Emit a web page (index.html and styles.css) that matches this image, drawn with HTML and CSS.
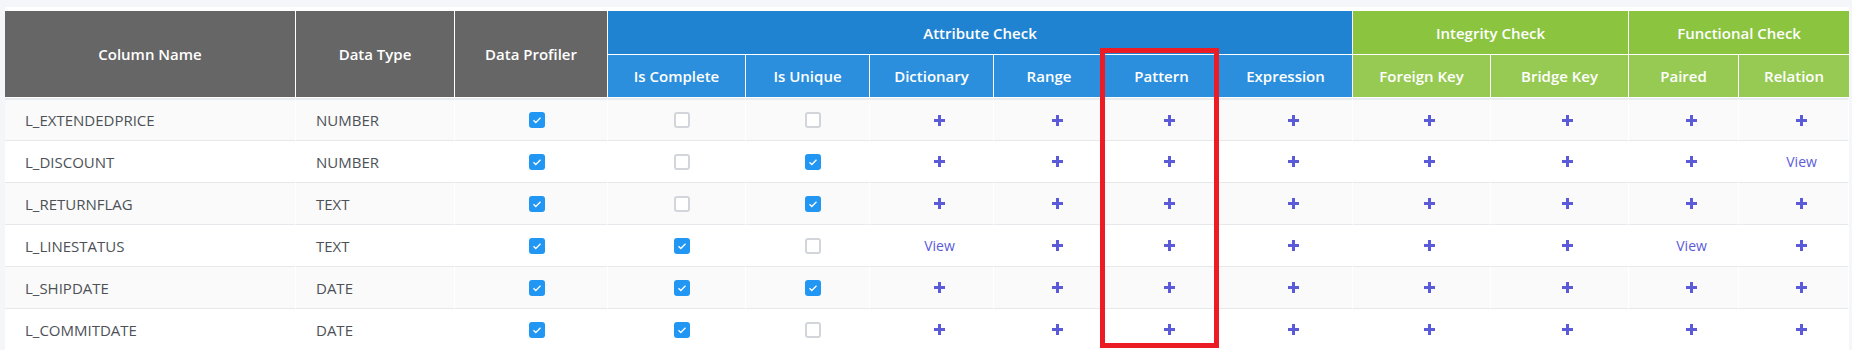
FILE: index.html
```html
<html>

<head>
    <link rel="stylesheet" href="styles.css">
</head>

<body>
    <div class="panel">
        <table class="rules">
            <colgroup>
                <col class="w-name">
                <col class="w-type">
                <col class="w-profiler">
                <col class="w-complete">
                <col class="w-unique">
                <col class="w-dict">
                <col class="w-range">
                <col class="w-pattern">
                <col class="w-expr">
                <col class="w-fk">
                <col class="w-bk">
                <col class="w-paired">
                <col class="w-relation">
            </colgroup>
            <thead>
                <tr class="head-top">
                    <th rowspan="2" class="grey">Column Name</th>
                    <th rowspan="2" class="grey">Data Type</th>
                    <th rowspan="2" class="grey">Data Profiler</th>
                    <th colspan="6" class="blue">Attribute Check</th>
                    <th colspan="2" class="green">Integrity Check</th>
                    <th colspan="2" class="green">Functional Check</th>
                </tr>
                <tr class="head-sub">
                    <th class="blue-light">Is Complete</th>
                    <th class="blue-light">Is Unique</th>
                    <th class="blue-light">Dictionary</th>
                    <th class="blue-light">Range</th>
                    <th class="blue-light">Pattern</th>
                    <th class="blue-light">Expression</th>
                    <th class="green-light">Foreign Key</th>
                    <th class="green-light">Bridge Key</th>
                    <th class="green-light">Paired</th>
                    <th class="green-light">Relation</th>
                </tr>
            </thead>
            <tbody>
                <tr>
                    <td class="txt">L_EXTENDEDPRICE</td>
                    <td class="txt">NUMBER</td>
                    <td><span class="box on"><svg viewBox="0 0 16 16"><path d="M4.5 8.3l2.3 2.2 4.7-4.7"/></svg></span></td>
                    <td><span class="box"></span></td>
                    <td><span class="box"></span></td>
                    <td><span class="add"><svg viewBox="0 0 11 11"><rect x="4" y="0" width="3" height="11"/><rect x="0" y="4" width="11" height="3"/></svg></span></td>
                    <td><span class="add"><svg viewBox="0 0 11 11"><rect x="4" y="0" width="3" height="11"/><rect x="0" y="4" width="11" height="3"/></svg></span></td>
                    <td><span class="add"><svg viewBox="0 0 11 11"><rect x="4" y="0" width="3" height="11"/><rect x="0" y="4" width="11" height="3"/></svg></span></td>
                    <td><span class="add"><svg viewBox="0 0 11 11"><rect x="4" y="0" width="3" height="11"/><rect x="0" y="4" width="11" height="3"/></svg></span></td>
                    <td><span class="add"><svg viewBox="0 0 11 11"><rect x="4" y="0" width="3" height="11"/><rect x="0" y="4" width="11" height="3"/></svg></span></td>
                    <td><span class="add"><svg viewBox="0 0 11 11"><rect x="4" y="0" width="3" height="11"/><rect x="0" y="4" width="11" height="3"/></svg></span></td>
                    <td><span class="add"><svg viewBox="0 0 11 11"><rect x="4" y="0" width="3" height="11"/><rect x="0" y="4" width="11" height="3"/></svg></span></td>
                    <td><span class="add"><svg viewBox="0 0 11 11"><rect x="4" y="0" width="3" height="11"/><rect x="0" y="4" width="11" height="3"/></svg></span></td>
                </tr>
                <tr>
                    <td class="txt">L_DISCOUNT</td>
                    <td class="txt">NUMBER</td>
                    <td><span class="box on"><svg viewBox="0 0 16 16"><path d="M4.5 8.3l2.3 2.2 4.7-4.7"/></svg></span></td>
                    <td><span class="box"></span></td>
                    <td><span class="box on"><svg viewBox="0 0 16 16"><path d="M4.5 8.3l2.3 2.2 4.7-4.7"/></svg></span></td>
                    <td><span class="add"><svg viewBox="0 0 11 11"><rect x="4" y="0" width="3" height="11"/><rect x="0" y="4" width="11" height="3"/></svg></span></td>
                    <td><span class="add"><svg viewBox="0 0 11 11"><rect x="4" y="0" width="3" height="11"/><rect x="0" y="4" width="11" height="3"/></svg></span></td>
                    <td><span class="add"><svg viewBox="0 0 11 11"><rect x="4" y="0" width="3" height="11"/><rect x="0" y="4" width="11" height="3"/></svg></span></td>
                    <td><span class="add"><svg viewBox="0 0 11 11"><rect x="4" y="0" width="3" height="11"/><rect x="0" y="4" width="11" height="3"/></svg></span></td>
                    <td><span class="add"><svg viewBox="0 0 11 11"><rect x="4" y="0" width="3" height="11"/><rect x="0" y="4" width="11" height="3"/></svg></span></td>
                    <td><span class="add"><svg viewBox="0 0 11 11"><rect x="4" y="0" width="3" height="11"/><rect x="0" y="4" width="11" height="3"/></svg></span></td>
                    <td><span class="add"><svg viewBox="0 0 11 11"><rect x="4" y="0" width="3" height="11"/><rect x="0" y="4" width="11" height="3"/></svg></span></td>
                    <td><a class="view">View</a></td>
                </tr>
                <tr>
                    <td class="txt">L_RETURNFLAG</td>
                    <td class="txt">TEXT</td>
                    <td><span class="box on"><svg viewBox="0 0 16 16"><path d="M4.5 8.3l2.3 2.2 4.7-4.7"/></svg></span></td>
                    <td><span class="box"></span></td>
                    <td><span class="box on"><svg viewBox="0 0 16 16"><path d="M4.5 8.3l2.3 2.2 4.7-4.7"/></svg></span></td>
                    <td><span class="add"><svg viewBox="0 0 11 11"><rect x="4" y="0" width="3" height="11"/><rect x="0" y="4" width="11" height="3"/></svg></span></td>
                    <td><span class="add"><svg viewBox="0 0 11 11"><rect x="4" y="0" width="3" height="11"/><rect x="0" y="4" width="11" height="3"/></svg></span></td>
                    <td><span class="add"><svg viewBox="0 0 11 11"><rect x="4" y="0" width="3" height="11"/><rect x="0" y="4" width="11" height="3"/></svg></span></td>
                    <td><span class="add"><svg viewBox="0 0 11 11"><rect x="4" y="0" width="3" height="11"/><rect x="0" y="4" width="11" height="3"/></svg></span></td>
                    <td><span class="add"><svg viewBox="0 0 11 11"><rect x="4" y="0" width="3" height="11"/><rect x="0" y="4" width="11" height="3"/></svg></span></td>
                    <td><span class="add"><svg viewBox="0 0 11 11"><rect x="4" y="0" width="3" height="11"/><rect x="0" y="4" width="11" height="3"/></svg></span></td>
                    <td><span class="add"><svg viewBox="0 0 11 11"><rect x="4" y="0" width="3" height="11"/><rect x="0" y="4" width="11" height="3"/></svg></span></td>
                    <td><span class="add"><svg viewBox="0 0 11 11"><rect x="4" y="0" width="3" height="11"/><rect x="0" y="4" width="11" height="3"/></svg></span></td>
                </tr>
                <tr>
                    <td class="txt">L_LINESTATUS</td>
                    <td class="txt">TEXT</td>
                    <td><span class="box on"><svg viewBox="0 0 16 16"><path d="M4.5 8.3l2.3 2.2 4.7-4.7"/></svg></span></td>
                    <td><span class="box on"><svg viewBox="0 0 16 16"><path d="M4.5 8.3l2.3 2.2 4.7-4.7"/></svg></span></td>
                    <td><span class="box"></span></td>
                    <td><a class="view">View</a></td>
                    <td><span class="add"><svg viewBox="0 0 11 11"><rect x="4" y="0" width="3" height="11"/><rect x="0" y="4" width="11" height="3"/></svg></span></td>
                    <td><span class="add"><svg viewBox="0 0 11 11"><rect x="4" y="0" width="3" height="11"/><rect x="0" y="4" width="11" height="3"/></svg></span></td>
                    <td><span class="add"><svg viewBox="0 0 11 11"><rect x="4" y="0" width="3" height="11"/><rect x="0" y="4" width="11" height="3"/></svg></span></td>
                    <td><span class="add"><svg viewBox="0 0 11 11"><rect x="4" y="0" width="3" height="11"/><rect x="0" y="4" width="11" height="3"/></svg></span></td>
                    <td><span class="add"><svg viewBox="0 0 11 11"><rect x="4" y="0" width="3" height="11"/><rect x="0" y="4" width="11" height="3"/></svg></span></td>
                    <td><a class="view">View</a></td>
                    <td><span class="add"><svg viewBox="0 0 11 11"><rect x="4" y="0" width="3" height="11"/><rect x="0" y="4" width="11" height="3"/></svg></span></td>
                </tr>
                <tr>
                    <td class="txt">L_SHIPDATE</td>
                    <td class="txt">DATE</td>
                    <td><span class="box on"><svg viewBox="0 0 16 16"><path d="M4.5 8.3l2.3 2.2 4.7-4.7"/></svg></span></td>
                    <td><span class="box on"><svg viewBox="0 0 16 16"><path d="M4.5 8.3l2.3 2.2 4.7-4.7"/></svg></span></td>
                    <td><span class="box on"><svg viewBox="0 0 16 16"><path d="M4.5 8.3l2.3 2.2 4.7-4.7"/></svg></span></td>
                    <td><span class="add"><svg viewBox="0 0 11 11"><rect x="4" y="0" width="3" height="11"/><rect x="0" y="4" width="11" height="3"/></svg></span></td>
                    <td><span class="add"><svg viewBox="0 0 11 11"><rect x="4" y="0" width="3" height="11"/><rect x="0" y="4" width="11" height="3"/></svg></span></td>
                    <td><span class="add"><svg viewBox="0 0 11 11"><rect x="4" y="0" width="3" height="11"/><rect x="0" y="4" width="11" height="3"/></svg></span></td>
                    <td><span class="add"><svg viewBox="0 0 11 11"><rect x="4" y="0" width="3" height="11"/><rect x="0" y="4" width="11" height="3"/></svg></span></td>
                    <td><span class="add"><svg viewBox="0 0 11 11"><rect x="4" y="0" width="3" height="11"/><rect x="0" y="4" width="11" height="3"/></svg></span></td>
                    <td><span class="add"><svg viewBox="0 0 11 11"><rect x="4" y="0" width="3" height="11"/><rect x="0" y="4" width="11" height="3"/></svg></span></td>
                    <td><span class="add"><svg viewBox="0 0 11 11"><rect x="4" y="0" width="3" height="11"/><rect x="0" y="4" width="11" height="3"/></svg></span></td>
                    <td><span class="add"><svg viewBox="0 0 11 11"><rect x="4" y="0" width="3" height="11"/><rect x="0" y="4" width="11" height="3"/></svg></span></td>
                </tr>
                <tr>
                    <td class="txt">L_COMMITDATE</td>
                    <td class="txt">DATE</td>
                    <td><span class="box on"><svg viewBox="0 0 16 16"><path d="M4.5 8.3l2.3 2.2 4.7-4.7"/></svg></span></td>
                    <td><span class="box on"><svg viewBox="0 0 16 16"><path d="M4.5 8.3l2.3 2.2 4.7-4.7"/></svg></span></td>
                    <td><span class="box"></span></td>
                    <td><span class="add"><svg viewBox="0 0 11 11"><rect x="4" y="0" width="3" height="11"/><rect x="0" y="4" width="11" height="3"/></svg></span></td>
                    <td><span class="add"><svg viewBox="0 0 11 11"><rect x="4" y="0" width="3" height="11"/><rect x="0" y="4" width="11" height="3"/></svg></span></td>
                    <td><span class="add"><svg viewBox="0 0 11 11"><rect x="4" y="0" width="3" height="11"/><rect x="0" y="4" width="11" height="3"/></svg></span></td>
                    <td><span class="add"><svg viewBox="0 0 11 11"><rect x="4" y="0" width="3" height="11"/><rect x="0" y="4" width="11" height="3"/></svg></span></td>
                    <td><span class="add"><svg viewBox="0 0 11 11"><rect x="4" y="0" width="3" height="11"/><rect x="0" y="4" width="11" height="3"/></svg></span></td>
                    <td><span class="add"><svg viewBox="0 0 11 11"><rect x="4" y="0" width="3" height="11"/><rect x="0" y="4" width="11" height="3"/></svg></span></td>
                    <td><span class="add"><svg viewBox="0 0 11 11"><rect x="4" y="0" width="3" height="11"/><rect x="0" y="4" width="11" height="3"/></svg></span></td>
                    <td><span class="add"><svg viewBox="0 0 11 11"><rect x="4" y="0" width="3" height="11"/><rect x="0" y="4" width="11" height="3"/></svg></span></td>
                </tr>
            </tbody>
        </table>
        <!-- red review marker over the Pattern column -->
        <div class="highlight"></div>
    </div>
</body>

</html>
```

FILE: styles.css
```css
body {
    margin: 0;
    background: #f5f6f9;
    font-family: "Open Sans", "Noto Sans", Arial, sans-serif;
}

.panel {
    position: relative;
    margin: 7px 3px 0 5px;
    padding-top: 4px;
    background: #fff;
}

.rules {
    width: 1844px;
    table-layout: fixed;
    border-collapse: separate;
    border-spacing: 0;
}

.w-name { width: 291px; }
.w-type { width: 159px; }
.w-profiler { width: 153px; }
.w-complete { width: 138px; }
.w-unique { width: 124px; }
.w-dict { width: 124px; }
.w-range { width: 111px; }
.w-pattern { width: 114px; }
.w-expr { width: 134px; }
.w-fk { width: 138px; }
.w-bk { width: 138px; }
.w-paired { width: 110px; }
.w-relation { width: 110px; }

.rules th {
    padding: 0;
    color: #fff;
    font-size: 15px;
    font-weight: 600;
    text-align: center;
    border-right: 1px solid #fff;
    border-bottom: 1px solid #fff;
}

.rules th:last-child {
    border-right: none;
}

.head-top {
    height: 44px;
}

.head-sub {
    height: 43px;
}

.grey {
    background: #666666;
}

.blue {
    background: #2083d1;
}

.blue-light {
    background: #2b8fdd;
}

.green {
    background: #8bc43f;
}

.green-light {
    background: #97ca53;
}

.rules td {
    height: 42px;
    padding: 0 0 0 16px;
    text-align: center;
    font-size: 15px;
    color: #4d5157;
    border-right: 1px solid #fff;
    border-bottom: 1px solid #e6e8eb;
}

.rules tbody tr:first-child td {
    height: 43px;
    border-top: 2px solid #e9ecef;
}

.rules tbody tr:nth-child(odd) td {
    background: #fafafa;
}

.rules td.txt {
    padding-left: 20px;
    text-align: left;
}

.box {
    display: inline-block;
    width: 16px;
    height: 16px;
    box-sizing: border-box;
    border: 2px solid #d2d6db;
    border-radius: 3px;
    background: #fff;
    vertical-align: middle;
    margin-left: -5px;
}

.box.on {
    border: none;
    background: #2196f3;
}

.box svg {
    display: block;
    width: 16px;
    height: 16px;
    fill: none;
    stroke: #fff;
    stroke-width: 1.3;
}

.add {
    display: inline-block;
    vertical-align: middle;
    line-height: 0;
}

.add svg {
    width: 11px;
    height: 11px;
    fill: #5b5bd9;
}

.view {
    color: #5b5bd9;
    font-size: 14px;
    cursor: pointer;
}

.highlight {
    position: absolute;
    left: 1095px;
    top: 41px;
    width: 119px;
    height: 300px;
    box-sizing: border-box;
    border: 5px solid #ec1c24;
}
```
